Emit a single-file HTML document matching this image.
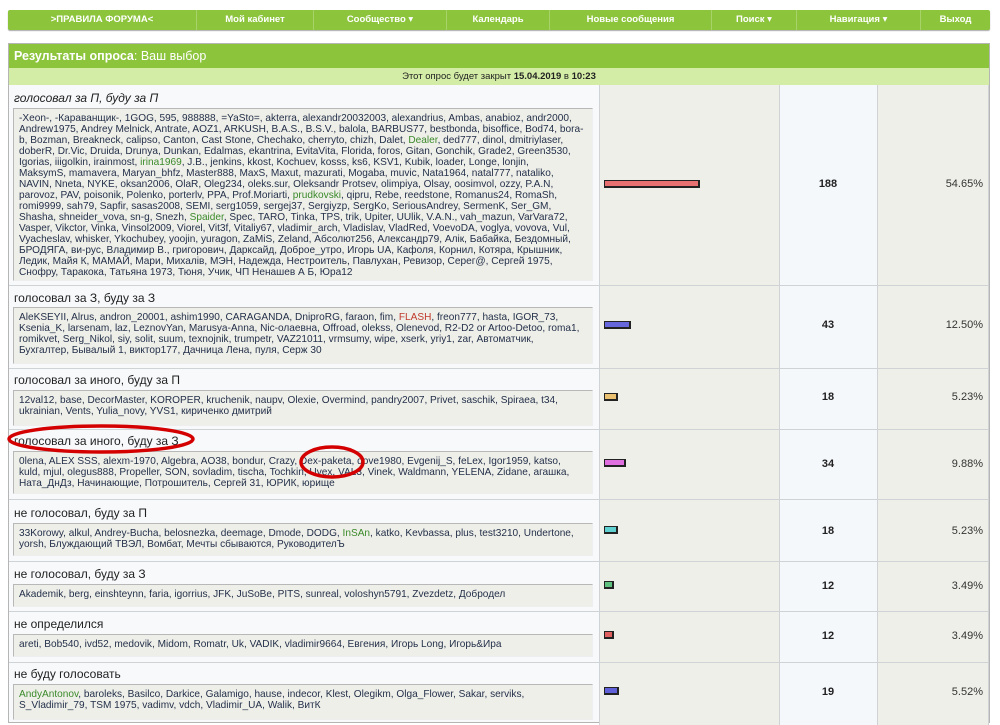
<!DOCTYPE html>
<html><head><meta charset="utf-8">
<style>
*{margin:0;padding:0;box-sizing:border-box}
body{width:1000px;height:719px;background:#fff;font-family:"Liberation Sans","DejaVu Sans",sans-serif;position:relative;overflow:hidden;color:#222}
.nav{position:absolute;left:8px;top:10px;width:982px;height:20px;background:#8cc43c;border-radius:2px;box-shadow:0 1px 1px #aaa}
.nav div{position:absolute;top:0;height:20px;line-height:20px;text-align:center;color:#fff;font-weight:bold;font-size:9.5px;border-right:1px solid #a7d36a}
.box{position:absolute;left:8px;top:43px;width:982px;height:680px;border:1px solid #b5b5b5;background:#f7f9fb}
.hdr{position:absolute;left:9px;top:44px;width:980px;height:24px;background:#8cc43c;color:#fff;font-size:12.5px;line-height:24px;padding-left:5px}
.sub{position:absolute;left:9px;top:68px;width:980px;height:17px;background:#d4eda6;font-size:9.5px;line-height:17px;text-align:center;color:#222}
.col{position:absolute;top:85px;height:640px}
.hl{position:absolute;left:9px;width:980px;height:1px;background:#cfd3d6}
.t{position:absolute;left:14px;font-size:12px;color:#222;white-space:nowrap}
.n{position:absolute;left:13px;width:580px;background:#efefe9;border:1px solid #b8b8b8;border-right-color:#eee;border-bottom-color:#eee;font-size:10.1px;line-height:11px;padding:4px 0 0 5px;white-space:nowrap;color:#23304a;overflow:hidden}
.g{color:#3a8a2a}.r{color:#c0392b}
.bar{position:absolute;left:604px;height:8px;border:1px solid #222;border-right-width:2px;border-bottom-width:2px}
.c{position:absolute;left:779px;width:98px;text-align:center;font-weight:bold;font-size:11px}
.p{position:absolute;left:877px;width:106px;text-align:right;font-size:11px;color:#333}
</style></head><body>
<div class="nav">
<div style="left:0;width:189px">&gt;ПРАВИЛА ФОРУМА&lt;</div>
<div style="left:189px;width:117px">Мой кабинет</div>
<div style="left:306px;width:133px">Сообщество ▾</div>
<div style="left:439px;width:103px">Календарь</div>
<div style="left:542px;width:162px">Новые сообщения</div>
<div style="left:704px;width:85px">Поиск ▾</div>
<div style="left:789px;width:124px">Навигация ▾</div>
<div style="left:913px;width:69px;border:0">Выход</div>
</div>
<div class="box"></div>
<div class="hdr"><b>Результаты опроса</b>: Ваш выбор</div>
<div class="sub">Этот опрос будет закрыт <b>15.04.2019</b> в <b>10:23</b></div>
<div class="col" style="left:599px;width:180px;background:#efefe9;border-left:1px solid #cfd3d6"></div>
<div class="col" style="left:779px;width:98px;background:#f5f8fb;border-left:1px solid #cfd3d6"></div>
<div class="col" style="left:877px;width:112px;background:#efefe9;border-left:1px solid #cfd3d6;border-right:1px solid #cfd3d6"></div>
<div class="hl" style="top:285px"></div>
<div class="hl" style="top:368px"></div>
<div class="hl" style="top:429px"></div>
<div class="hl" style="top:499px"></div>
<div class="hl" style="top:561px"></div>
<div class="hl" style="top:611px"></div>
<div class="hl" style="top:662px"></div>

<div class="t" style="top:91px;font-style:italic">голосовал за П, буду за П</div>
<div class="n" style="top:108px;height:173px">-Xeon-, -Караванщик-, 1GOG, 595, 988888, =YaSto=, akterra, alexandr20032003, alexandrius, Ambas, anabioz, andr2000,<br>Andrew1975, Andrey Melnick, Antrate, AOZ1, ARKUSH, B.A.S., B.S.V., balola, BARBUS77, bestbonda, bisoffice, Bod74, bora-<br>b, Bozman, Breakneck, calipso, Canton, Cast Stone, Chechako, cherryto, chizh, Dalet, <span class="g">Dealer</span>, ded777, dinol, dmitriylaser,<br>doberR, Dr.Vic, Druida, Drunya, Dunkan, Edalmas, ekantrina, EvitaVita, Florida, foros, Gitan, Gonchik, Grade2, Green3530,<br>Igorias, iiigolkin, irainmost, <span class="g">irina1969</span>, J.B., jenkins, kkost, Kochuev, kosss, ks6, KSV1, Kubik, loader, Longe, lonjin,<br>MaksymS, mamavera, Maryan_bhfz, Master888, MaxS, Maxut, mazurati, Mogaba, muvic, Nata1964, natal777, nataliko,<br>NAVIN, Nneta, NYKE, oksan2006, OlaR, Oleg234, oleks.sur, Oleksandr Protsev, olimpiya, Olsay, oosimvol, ozzy, P.A.N,<br>parovoz, PAV, poisonik, Polenko, porterlv, PPA, Prof.Moriarti, <span class="g">prudkovski</span>, qipru, Rebe, reedstone, Romanus24, RomaSh,<br>romi9999, sah79, Sapfir, sasas2008, SEMI, serg1059, sergej37, Sergiyzp, SergKo, SeriousAndrey, SermenK, Ser_GM,<br>Shasha, shneider_vova, sn-g, Snezh, <span class="g">Spaider</span>, Spec, TARO, Tinka, TPS, trik, Upiter, UUlik, V.A.N., vah_mazun, VarVara72,<br>Vasper, Vikctor, Vinka, Vinsol2009, Viorel, Vit3f, Vitaliy67, vladimir_arch, Vladislav, VladRed, VoevoDA, voglya, vovova, Vul,<br>Vyacheslav, whisker, Ykochubey, yoojin, yuragon, ZaMiS, Zeland, Абсолют256, Александр79, Алiк, Бабайка, Бездомный,<br>БРОДЯГА, ви-рус, Владимир В., григорович, Дарксайд, Доброе_утро, Игорь UA, Кафоля, Корнил, Котяра, Крышник,<br>Ледик, Майя К, МАМАЙ, Мари, Михалiв, МЭН, Надежда, Нестроитель, Павлухан, Ревизор, Серег@, Сергей 1975,<br>Снофру, Таракока, Татьяна 1973, Тюня, Учик, ЧП Ненашев А Б, Юра12</div>
<div class="bar" style="top:180px;width:96px;background:#e87070"></div>
<div class="c" style="top:178px">188</div><div class="p" style="top:178px">54.65%</div>

<div class="t" style="top:291px">голосовал за З, буду за З</div>
<div class="n" style="top:307px;height:57px">AleKSEYII, Alrus, andron_20001, ashim1990, CARAGANDA, DniproRG, faraon, fim, <span class="r">FLASH</span>, freon777, hasta, IGOR_73,<br>Ksenia_K, larsenam, laz, LeznovYan, Marusya-Anna, Nic-олаевна, Offroad, olekss, Olenevod, R2-D2 or Artoo-Detoo, roma1,<br>romikvet, Serg_Nikol, siy, solit, suum, texnojnik, trumpetr, VAZ21011, vrmsumy, wipe, xserk, yriy1, zar, Автоматчик,<br>Бухгалтер, Бывалый 1, виктор177, Дачница Лена, пуля, Серж 30</div>
<div class="bar" style="top:321px;width:27px;background:#6666dd"></div>
<div class="c" style="top:319px">43</div><div class="p" style="top:319px">12.50%</div>

<div class="t" style="top:373px">голосовал за иного, буду за П</div>
<div class="n" style="top:390px;height:36px">12val12, base, DecorMaster, KOROPER, kruchenik, naupv, Olexie, Overmind, pandry2007, Privet, saschik, Spiraea, t34,<br>ukrainian, Vents, Yulia_novy, YVS1, кириченко дмитрий</div>
<div class="bar" style="top:393px;width:14px;background:#e8c070"></div>
<div class="c" style="top:391px">18</div><div class="p" style="top:391px">5.23%</div>

<div class="t" style="top:434px">голосовал за иного, буду за З</div>
<div class="n" style="top:451px;height:43px">0lena, ALEX SSS, alexm-1970, Algebra, AO38, bondur, Crazy, Dex-paketa, dove1980, Evgenij_S, feLex, Igor1959, katso,<br>kuld, mjul, olegus888, Propeller, SON, sovladim, tischa, Tochkin, Uvex, VAL3, Vinek, Waldmann, YELENA, Zidane, агашка,<br>Ната_ДнДз, Начинающие, Потрошитель, Сергей 31, ЮРИК, юрище</div>
<div class="bar" style="top:459px;width:22px;background:#e070e0"></div>
<div class="c" style="top:458px">34</div><div class="p" style="top:458px">9.88%</div>

<div class="t" style="top:506px">не голосовал, буду за П</div>
<div class="n" style="top:523px;height:33px">33Korowy, alkul, Andrey-Bucha, belosnezka, deemage, Dmode, DODG, <span class="g">InSAn</span>, katko, Kevbassa, plus, test3210, Undertone,<br>yorsh, Блуждающий ТВЭЛ, Вомбат, Мечты сбываются, РуководителЪ</div>
<div class="bar" style="top:526px;width:14px;background:#60d0d0"></div>
<div class="c" style="top:525px">18</div><div class="p" style="top:525px">5.23%</div>

<div class="t" style="top:567px">не голосовал, буду за З</div>
<div class="n" style="top:584px;height:23px">Akademik, berg, einshteynn, faria, igorrius, JFK, JuSoBe, PITS, sunreal, voloshyn5791, Zvezdetz, Добродел</div>
<div class="bar" style="top:581px;width:10px;background:#60c080"></div>
<div class="c" style="top:580px">12</div><div class="p" style="top:580px">3.49%</div>

<div class="t" style="top:617px">не определился</div>
<div class="n" style="top:634px;height:23px">areti, Bob540, ivd52, medovik, Midom, Romatr, Uk, VADIK, vladimir9664, Евгения, Игорь Long, Игорь&amp;Ира</div>
<div class="bar" style="top:631px;width:10px;background:#e06060"></div>
<div class="c" style="top:630px">12</div><div class="p" style="top:630px">3.49%</div>

<div class="t" style="top:667px">не буду голосовать</div>
<div class="n" style="top:684px;height:36px"><span class="g">AndyAntonov</span>, baroleks, Basilco, Darkice, Galamigo, hause, indecor, Klest, Olegikm, Olga_Flower, Sakar, serviks,<br>S_Vladimir_79, TSM 1975, vadimv, vdch, Vladimir_UA, Walik, ВитК</div>
<div class="bar" style="top:687px;width:15px;background:#6060d8"></div>
<div class="c" style="top:686px">19</div><div class="p" style="top:686px">5.52%</div>

<svg width="1000" height="719" style="position:absolute;left:0;top:0">
<ellipse cx="101" cy="439" rx="92" ry="13" fill="none" stroke="#d40000" stroke-width="3.5"/>
<ellipse cx="332" cy="462" rx="31" ry="15" fill="none" stroke="#d40000" stroke-width="3.5"/>
</svg>
</body></html>
